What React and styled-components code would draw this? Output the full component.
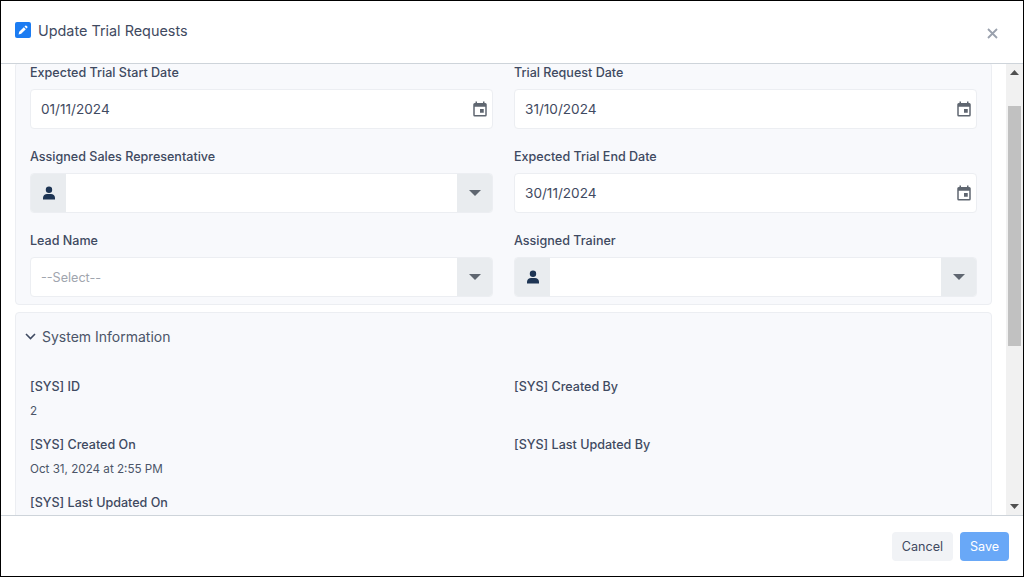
import React from "react";
import styled, { createGlobalStyle } from "styled-components";

const GlobalStyle = createGlobalStyle`
  html, body {
    margin: 0;
    padding: 0;
    background: #fff;
    font-family: Inter, "Liberation Sans", sans-serif;
  }
  * { box-sizing: border-box; }
`;

const Modal = styled.div`
  width: 1024px;
  height: 577px;
  display: flex;
  flex-direction: column;
  background: #fff;
  border: 1px solid #000;
  overflow: hidden;
`;

const Header = styled.div`
  height: 63px;
  flex: none;
  display: flex;
  align-items: center;
  justify-content: space-between;
  padding: 0 25px 4px 14px;
  border-bottom: 1px solid #ced4da;
`;

const Title = styled.div`
  display: flex;
  align-items: center;
  gap: 7px;
  font-size: 14.4px;
  color: #3f4a61;
`;

const Close = styled.div`
  display: flex;
  margin-top: 6px;
  color: #9aa1ad;
`;

const Body = styled.div`
  flex: 1;
  min-height: 0;
  display: flex;
`;

const Content = styled.div`
  flex: 1;
  min-width: 0;
  overflow: hidden;
  padding: 0 14px;
`;

const Panel = styled.div`
  background: #f8f9fc;
  border: 1px solid #eceef2;
  border-radius: 4px;
  padding: ${(p) => p.$pad};
  margin-bottom: 7px;
  margin-top: ${(p) => p.$top || "0"};
`;

const Grid = styled.div`
  display: grid;
  grid-template-columns: 463px 463px;
  column-gap: 21px;
  row-gap: ${(p) => p.$gap};
`;

const Label = styled.div`
  font-size: 12.55px;
  font-weight: 500;
  line-height: 20px;
  color: #3f4a61;
  margin-bottom: ${(p) => p.$mb || "6px"};
`;

const InputBox = styled.div`
  height: 40px;
  display: flex;
  align-items: stretch;
  background: #fff;
  border: 1px solid #eceef2;
  border-radius: 4px;
  overflow: hidden;
`;

const InputText = styled.div`
  flex: 1;
  display: flex;
  align-items: center;
  padding-left: 10px;
  font-size: ${(p) => (p.$muted ? "12.6px" : "13.6px")};
  color: ${(p) => (p.$muted ? "#a0a5ae" : "#3f4a61")};
`;

const IconCell = styled.div`
  flex: none;
  width: ${(p) => p.$w};
  display: flex;
  align-items: center;
  justify-content: center;
  background: ${(p) => (p.$plain ? "transparent" : "#e9ecef")};
  color: #6b7280;
`;

const SectionHead = styled.div`
  display: flex;
  align-items: center;
  gap: 6px;
  height: 20px;
  font-size: 14px;
  color: #4b5568;
  margin: 0 0 31px -5px;
`;

const Value = styled.div`
  font-size: 11.65px;
  line-height: 18px;
  color: #4b5568;
`;

const Track = styled.div`
  width: 17px;
  flex: none;
  display: flex;
  flex-direction: column;
  background: #f1f1f1;
`;

const TrackArrow = styled.div`
  height: 17px;
  flex: none;
  display: flex;
  align-items: center;
  justify-content: center;
  color: #505050;
`;

const Thumb = styled.div`
  height: 240px;
  margin: 25px 2px 0;
  background: #c1c1c1;
`;

const TrackFill = styled.div`
  flex: 1;
`;

const Footer = styled.div`
  height: 61px;
  flex: none;
  display: flex;
  justify-content: flex-end;
  align-items: center;
  gap: 7px;
  padding: 1px 14px 0 0;
  border-top: 1px solid #ced4da;
`;

const Button = styled.button`
  height: 29px;
  width: ${(p) => p.$w};
  border: 0;
  border-radius: 4px;
  font: 400 12.6px Inter, "Liberation Sans", sans-serif;
  color: ${(p) => (p.$primary ? "#fff" : "#3f4a61")};
  background: ${(p) => (p.$primary ? "#69a8f7" : "#f1f3f6")};
`;

const EditIcon = () => (
  <svg width="16" height="16" viewBox="0 0 16 16">
    <rect width="16" height="16" rx="2" fill="#1c7cf2" />
    <path d="M3.6 12.4l.6-2.6 4.6-4.6 2 2-4.6 4.6zM9.5 4.5l.8-.8a.8.8 0 0 1 1.1 0l.9.9a.8.8 0 0 1 0 1.1l-.8.8z" fill="#fff" />
  </svg>
);

const CloseIcon = () => (
  <svg width="11" height="11" viewBox="0 0 11 11" fill="none" stroke="currentColor" strokeWidth="1.8">
    <path d="M1 1l9 9M10 1l-9 9" />
  </svg>
);

const CalendarIcon = () => (
  <svg width="18" height="18" viewBox="0 0 24 24" fill="#5f6670">
    <path d="M19 4h-1V2h-2v2H8V2H6v2H5a2 2 0 0 0-2 2v14a2 2 0 0 0 2 2h14a2 2 0 0 0 2-2V6a2 2 0 0 0-2-2zm0 16H5V9h14zm-7-8h5v5h-5z" />
  </svg>
);

const UserIcon = () => (
  <svg width="14" height="14" viewBox="0 0 14 14" fill="#1e3554">
    <circle cx="7" cy="3.8" r="3.2" />
    <path d="M1 13.5v-1.7C1 9.5 3 8 5 8h4c2 0 4 1.5 4 3.8v1.7z" />
  </svg>
);

const Caret = () => (
  <svg width="12" height="6" viewBox="0 0 12 6" fill="#5f6670">
    <path d="M0 0h12L6 6z" />
  </svg>
);

const Chevron = () => (
  <svg width="11" height="7" viewBox="0 0 11 7" fill="none" stroke="#3f4a61" strokeWidth="1.6">
    <path d="M1 1l4.5 4.5L10 1" />
  </svg>
);

const TrackIcon = ({ d }) => (
  <svg width="9" height="5" viewBox="0 0 9 5" fill="currentColor">
    <path d={d} />
  </svg>
);

const DateField = ({ label, value }) => (
  <div>
    <Label>{label}</Label>
    <InputBox>
      <InputText>{value}</InputText>
      <IconCell $plain $w="25px">
        <CalendarIcon />
      </IconCell>
    </InputBox>
  </div>
);

const LookupField = ({ label }) => (
  <div>
    <Label>{label}</Label>
    <InputBox>
      <IconCell $w="35px">
        <UserIcon />
      </IconCell>
      <InputText />
      <IconCell $w="35px">
        <Caret />
      </IconCell>
    </InputBox>
  </div>
);

const SelectField = ({ label, placeholder }) => (
  <div>
    <Label>{label}</Label>
    <InputBox>
      <InputText $muted>{placeholder}</InputText>
      <IconCell $w="35px">
        <Caret />
      </IconCell>
    </InputBox>
  </div>
);

const InfoField = ({ label, value }) => (
  <div>
    <Label $mb="5px">{label}</Label>
    {value && <Value>{value}</Value>}
  </div>
);

export default function App() {
  return (
    <>
      <GlobalStyle />
      <Modal>
        <Header>
          <Title>
            <EditIcon />
            Update Trial Requests
          </Title>
          <Close>
            <CloseIcon />
          </Close>
        </Header>
        <Body>
          <Content>
            <Panel $pad="0 14px 7px" $top="-2px">
              <Grid $gap="18px">
                <DateField label="Expected Trial Start Date" value="01/11/2024" />
                <DateField label="Trial Request Date" value="31/10/2024" />
                <LookupField label="Assigned Sales Representative" />
                <DateField label="Expected Trial End Date" value="30/11/2024" />
                <SelectField label="Lead Name" placeholder="--Select--" />
                <LookupField label="Assigned Trainer" />
              </Grid>
            </Panel>
            <Panel $pad="13px 14px 0">
              <SectionHead>
                <Chevron />
                System Information
              </SectionHead>
              <Grid $gap="15px">
                <InfoField label="[SYS] ID" value="2" />
                <InfoField label="[SYS] Created By" />
                <InfoField label="[SYS] Created On" value="Oct 31, 2024 at 2:55 PM" />
                <InfoField label="[SYS] Last Updated By" />
                <InfoField label="[SYS] Last Updated On" />
              </Grid>
            </Panel>
          </Content>
          <Track>
            <TrackArrow>
              <TrackIcon d="M4.5 0L9 5H0z" />
            </TrackArrow>
            <Thumb />
            <TrackFill />
            <TrackArrow>
              <TrackIcon d="M0 0h9L4.5 5z" />
            </TrackArrow>
          </Track>
        </Body>
        <Footer>
          <Button $w="61px">Cancel</Button>
          <Button $primary $w="49px">Save</Button>
        </Footer>
      </Modal>
    </>
  );
}
